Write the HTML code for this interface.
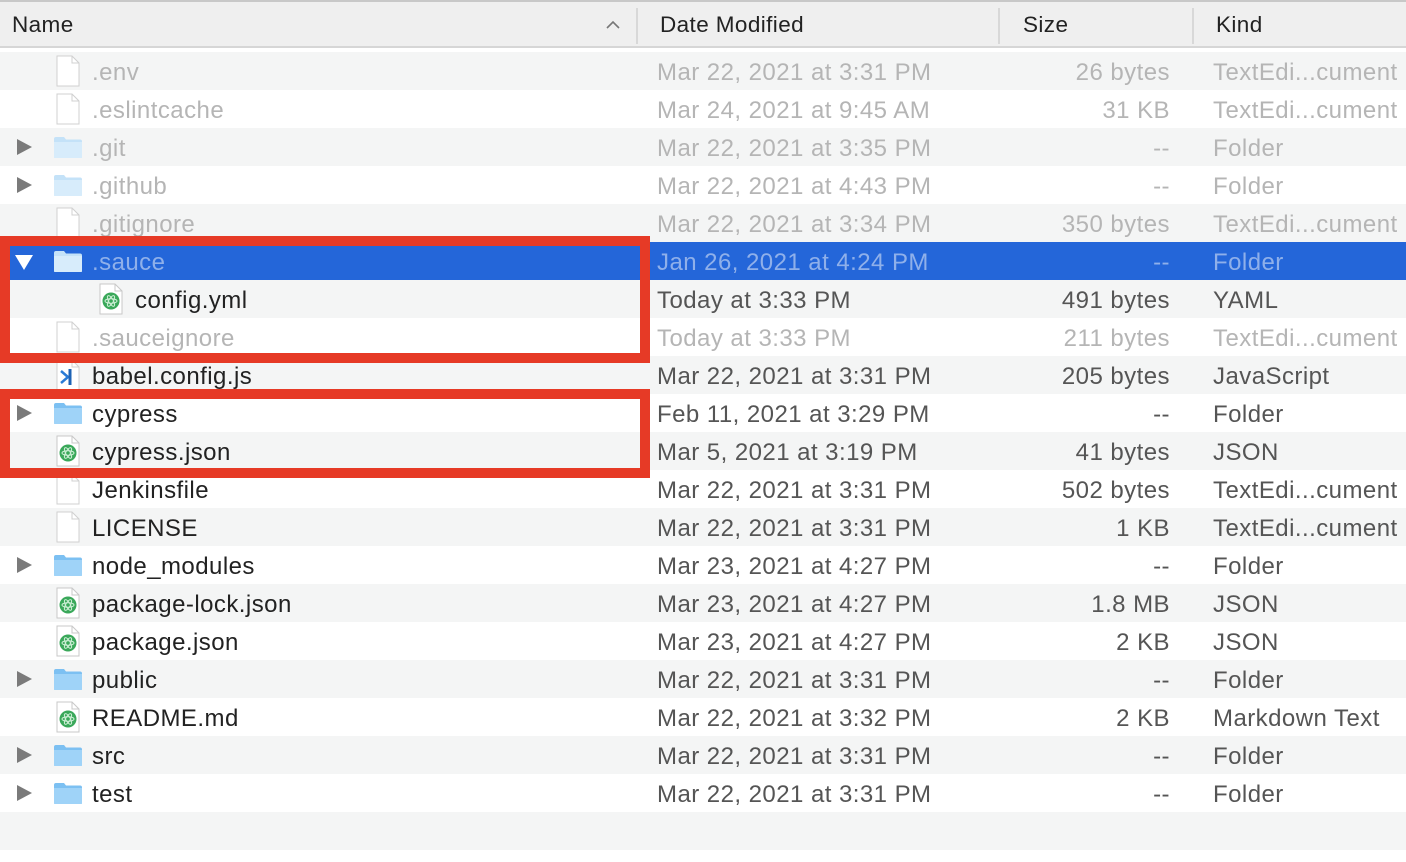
<!DOCTYPE html>
<html><head><meta charset="utf-8"><style>
*{margin:0;padding:0;box-sizing:border-box}
body{width:1406px;height:862px;background:#fff;font-family:"Liberation Sans",Arial,sans-serif;position:relative;overflow:hidden}
.hdr{position:absolute;left:0;top:0;width:1406px;height:48px;background:#efefef;border-top:2px solid #c8c8c8;border-bottom:2px solid #d6d6d6}
.hdr span{position:absolute;top:10px;font-size:22.5px;letter-spacing:0.4px;color:#222}
.sep{position:absolute;top:6px;width:2px;height:36px;background:#d8d8d8}
.row{position:absolute;left:0;width:1406px;height:38px;font-size:24px;letter-spacing:0.45px;color:#222;white-space:nowrap}
.g{background:#f4f5f5}
.sel{background:#2466d9}
.row .n{position:absolute;left:92px;top:7px}
.row .d{position:absolute;left:657px;top:7px;color:#555}
.row .s{position:absolute;right:236px;top:7px;color:#555}
.row .k{position:absolute;left:1213px;top:7px;color:#555}
.dim .n,.dim .d,.dim .s,.dim .k{color:#b5b5b5}
.sel .n,.sel .d,.sel .s,.sel .k{color:#8fb0ea}
.tri{position:absolute;left:17px;top:11px;width:0;height:0;border-top:8px solid transparent;border-bottom:8px solid transparent;border-left:15px solid #7a7a7a}
.tridn{position:absolute;left:15px;top:13px;width:0;height:0;border-left:9px solid transparent;border-right:9px solid transparent;border-top:15px solid #fff}
.fold{position:absolute;left:53px;top:8px;width:30px;height:23px}
.file{position:absolute;left:56px;top:3px;width:24px;height:32px}
.red{position:absolute;border:10px solid #e63a26}
</style></head><body>
<div class="hdr">
<span style="left:12px">Name</span>
<svg style="position:absolute;left:606px;top:18px" width="14" height="10"><path d="M1 8 L7 2 L13 8" fill="none" stroke="#777" stroke-width="1.6"/></svg>
<div class="sep" style="left:636px"></div>
<span style="left:660px">Date Modified</span>
<div class="sep" style="left:998px"></div>
<span style="left:1023px">Size</span>
<div class="sep" style="left:1192px"></div>
<span style="left:1216px">Kind</span>
</div>

<svg width="0" height="0" style="position:absolute">
<defs>
<symbol id="fd" viewBox="0 0 30 23"><path d="M1 3 Q1 1 3 1 L11 1 L13 3.5 L27 3.5 Q29 3.5 29 5.5 L29 21 Q29 22 28 22 L2 22 Q1 22 1 21 Z" fill="#7cc0f2"/><path d="M1 6 L29 6 L29 21 Q29 22 28 22 L2 22 Q1 22 1 21 Z" fill="#9fd3f8"/></symbol>
<symbol id="fdl" viewBox="0 0 30 23"><path d="M1 3 Q1 1 3 1 L11 1 L13 3.5 L27 3.5 Q29 3.5 29 5.5 L29 21 Q29 22 28 22 L2 22 Q1 22 1 21 Z" fill="#c4e2f8"/><path d="M1 6 L29 6 L29 21 Q29 22 28 22 L2 22 Q1 22 1 21 Z" fill="#d7ecfb"/></symbol>
<symbol id="fi" viewBox="0 0 24 32"><path d="M1 1 L16 1 L23 8 L23 31 L1 31 Z" fill="#fff" stroke="#d0d0d0"/><path d="M16 1 L16 8 L23 8" fill="none" stroke="#d0d0d0"/></symbol>
<symbol id="at" viewBox="0 0 24 32"><path d="M1 1 L16 1 L23 8 L23 31 L1 31 Z" fill="#fff" stroke="#c8c8c8"/><path d="M16 1 L16 8 L23 8" fill="none" stroke="#c8c8c8"/><circle cx="12" cy="18" r="8.5" fill="#3aa85a"/><g fill="none" stroke="#cdeed5" stroke-width="1"><ellipse cx="12" cy="18" rx="6" ry="2.3"/><ellipse cx="12" cy="18" rx="6" ry="2.3" transform="rotate(60 12 18)"/><ellipse cx="12" cy="18" rx="6" ry="2.3" transform="rotate(-60 12 18)"/></g></symbol>
</defs></svg>

<div class="row g dim" style="top:52px"><svg class="file"><use href="#fi"/></svg><span class="n">.env</span><span class="d">Mar 22, 2021 at 3:31 PM</span><span class="s">26 bytes</span><span class="k">TextEdi...cument</span></div>
<div class="row dim" style="top:90px"><svg class="file"><use href="#fi"/></svg><span class="n">.eslintcache</span><span class="d">Mar 24, 2021 at 9:45 AM</span><span class="s">31 KB</span><span class="k">TextEdi...cument</span></div>
<div class="row g dim" style="top:128px"><div class="tri"></div><svg class="fold"><use href="#fdl"/></svg><span class="n">.git</span><span class="d">Mar 22, 2021 at 3:35 PM</span><span class="s">--</span><span class="k">Folder</span></div>
<div class="row dim" style="top:166px"><div class="tri"></div><svg class="fold"><use href="#fdl"/></svg><span class="n">.github</span><span class="d">Mar 22, 2021 at 4:43 PM</span><span class="s">--</span><span class="k">Folder</span></div>
<div class="row g dim" style="top:204px"><svg class="file"><use href="#fi"/></svg><span class="n">.gitignore</span><span class="d">Mar 22, 2021 at 3:34 PM</span><span class="s">350 bytes</span><span class="k">TextEdi...cument</span></div>
<div class="row sel" style="top:242px"><div class="tridn"></div><svg class="fold"><use href="#fdl"/></svg><span class="n">.sauce</span><span class="d">Jan 26, 2021 at 4:24 PM</span><span class="s">--</span><span class="k">Folder</span></div>
<div class="row g" style="top:280px"><svg class="file" style="left:99px"><use href="#at"/></svg><span class="n" style="left:135px">config.yml</span><span class="d">Today at 3:33 PM</span><span class="s">491 bytes</span><span class="k">YAML</span></div>
<div class="row dim" style="top:318px"><svg class="file"><use href="#fi"/></svg><span class="n">.sauceignore</span><span class="d">Today at 3:33 PM</span><span class="s">211 bytes</span><span class="k">TextEdi...cument</span></div>
<div class="row g" style="top:356px"><svg class="file"><use href="#fi"/><path d="M5 12 L12 18 L5 24" fill="none" stroke="#2a7bd6" stroke-width="2.5"/><path d="M14 10 L14 26" stroke="#1e63b5" stroke-width="3"/></svg><span class="n">babel.config.js</span><span class="d">Mar 22, 2021 at 3:31 PM</span><span class="s">205 bytes</span><span class="k">JavaScript</span></div>
<div class="row" style="top:394px"><div class="tri"></div><svg class="fold"><use href="#fd"/></svg><span class="n">cypress</span><span class="d">Feb 11, 2021 at 3:29 PM</span><span class="s">--</span><span class="k">Folder</span></div>
<div class="row g" style="top:432px"><svg class="file"><use href="#at"/></svg><span class="n">cypress.json</span><span class="d">Mar 5, 2021 at 3:19 PM</span><span class="s">41 bytes</span><span class="k">JSON</span></div>
<div class="row" style="top:470px"><svg class="file"><use href="#fi"/></svg><span class="n">Jenkinsfile</span><span class="d">Mar 22, 2021 at 3:31 PM</span><span class="s">502 bytes</span><span class="k">TextEdi...cument</span></div>
<div class="row g" style="top:508px"><svg class="file"><use href="#fi"/></svg><span class="n">LICENSE</span><span class="d">Mar 22, 2021 at 3:31 PM</span><span class="s">1 KB</span><span class="k">TextEdi...cument</span></div>
<div class="row" style="top:546px"><div class="tri"></div><svg class="fold"><use href="#fd"/></svg><span class="n">node_modules</span><span class="d">Mar 23, 2021 at 4:27 PM</span><span class="s">--</span><span class="k">Folder</span></div>
<div class="row g" style="top:584px"><svg class="file"><use href="#at"/></svg><span class="n">package-lock.json</span><span class="d">Mar 23, 2021 at 4:27 PM</span><span class="s">1.8 MB</span><span class="k">JSON</span></div>
<div class="row" style="top:622px"><svg class="file"><use href="#at"/></svg><span class="n">package.json</span><span class="d">Mar 23, 2021 at 4:27 PM</span><span class="s">2 KB</span><span class="k">JSON</span></div>
<div class="row g" style="top:660px"><div class="tri"></div><svg class="fold"><use href="#fd"/></svg><span class="n">public</span><span class="d">Mar 22, 2021 at 3:31 PM</span><span class="s">--</span><span class="k">Folder</span></div>
<div class="row" style="top:698px"><svg class="file"><use href="#at"/></svg><span class="n">README.md</span><span class="d">Mar 22, 2021 at 3:32 PM</span><span class="s">2 KB</span><span class="k">Markdown Text</span></div>
<div class="row g" style="top:736px"><div class="tri"></div><svg class="fold"><use href="#fd"/></svg><span class="n">src</span><span class="d">Mar 22, 2021 at 3:31 PM</span><span class="s">--</span><span class="k">Folder</span></div>
<div class="row" style="top:774px"><div class="tri"></div><svg class="fold"><use href="#fd"/></svg><span class="n">test</span><span class="d">Mar 22, 2021 at 3:31 PM</span><span class="s">--</span><span class="k">Folder</span></div>
<div class="row g" style="top:812px"></div>

<div class="red" style="left:0;top:236px;width:650px;height:127px"></div>
<div class="red" style="left:0;top:389px;width:650px;height:89px"></div>
</body></html>
